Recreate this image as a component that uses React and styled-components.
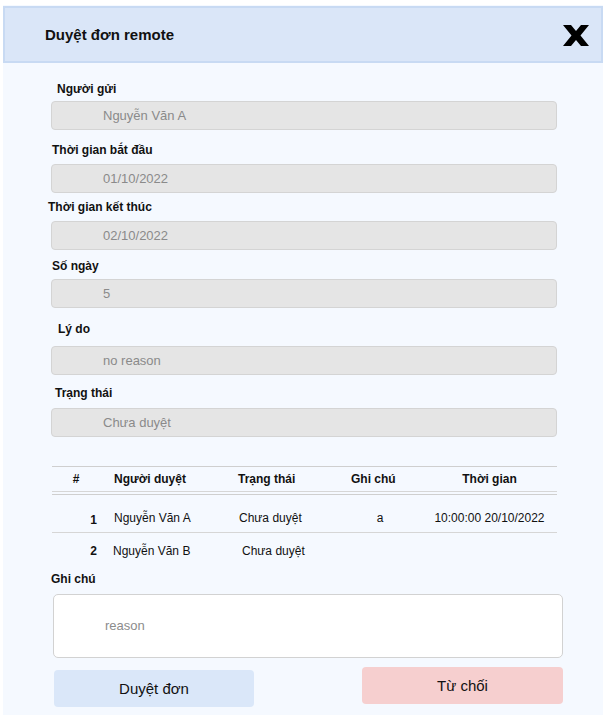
import React from 'react';
import styled, { createGlobalStyle } from 'styled-components';

const GlobalStyle = createGlobalStyle`
    body{
        margin: 0;
        background: #ffffff;
        font-family: "Liberation Sans", Arial, sans-serif;
        color: #111;
    }
    *{
        box-sizing: border-box;
    }
`

const Panel = styled.div`
    margin: 5px 0 0 3px;
    width: 600px;
    height: 710px;
    background: #f5f9ff;
    display: flex;
    flex-direction: column;
`

const Header = styled.div`
    margin-top: 1px;
    height: 57px;
    background: #dae6f8;
    border: 2px solid #c8daf3;
    display: flex;
    align-items: center;
    justify-content: space-between;
    padding: 0 12px 0 40px;

    h1{
        margin: 0;
        font-size: 15px;
        font-weight: bold;
    }
`

const CloseButton = styled.button`
    border: none;
    background: none;
    padding: 0;
    margin-top: 1px;
    width: 26px;
    height: 21px;
    cursor: pointer;
    display: flex;
`

const Body = styled.div`
    padding: 0 0 0 48px;
    display: flex;
    flex-direction: column;
`

const Field = styled.div`
    display: flex;
    flex-direction: column;
    margin-top: ${p => p.$top}px;
    gap: ${p => p.$gap}px;
`

const Label = styled.label`
    display: block;
    font-size: 12px;
    font-weight: bold;
    line-height: 16px;
    margin-left: ${p => p.$indent || 0}px;
`

const ReadInput = styled.div`
    width: 506px;
    height: 29px;
    background: #e5e5e5;
    border: 1px solid #d4d4d4;
    border-radius: 4px;
    padding-left: 51px;
    font-size: 13px;
    line-height: 27px;
    color: #8a8a8a;
`

const Table = styled.div`
    margin: 29px 0 0 1px;
    width: 505px;
`

const Row = styled.div`
    display: grid;
    grid-template-columns: 48px 125px 113px 84px 135px;
    height: ${p => p.$height}px;
    align-items: center;
    padding-top: ${p => p.$padTop || 0}px;
    border-top: ${p => p.$lineTop ? '1px solid #cfcfcf' : 'none'};
    border-bottom: ${p => p.$lineBottom ? '1px solid #d6d6d6' : 'none'};
    margin-top: ${p => p.$mt || 0}px;
`

const Cell = styled.div`
    font-size: 12px;
    font-weight: ${p => p.$bold ? 'bold' : 'normal'};
    text-align: ${p => p.$align || 'left'};
    padding-left: ${p => p.$pl || 0}px;
    padding-right: ${p => p.$pr || 0}px;
    padding-top: ${p => p.$nudge || 0}px;
    white-space: nowrap;
`

const NoteLabel = styled(Label)`
    margin-top: 2px;
`

const NoteArea = styled.textarea`
    margin: 7px 0 0 2px;
    width: 510px;
    height: 64px;
    resize: none;
    background: #ffffff;
    border: 1px solid #d2d2d2;
    border-radius: 5px;
    padding: 23px 51px;
    font-family: "Liberation Sans", Arial, sans-serif;
    font-size: 13px;
    line-height: 16px;
    outline: none;
    &::placeholder{
        color: #8c8c8c;
    }
`

const Actions = styled.div`
    display: flex;
    justify-content: space-between;
    align-items: flex-start;
    width: 509px;
    margin-left: 3px;
`

const ActionButton = styled.button`
    width: ${p => p.$width}px;
    height: 37px;
    margin-top: ${p => p.$top}px;
    border: none;
    border-radius: 4px;
    background: ${p => p.$danger ? '#f6cfcf' : '#dae7f9'};
    font-family: "Liberation Sans", Arial, sans-serif;
    font-size: 15px;
    color: #111;
    cursor: pointer;
`

const fields = [
    { label: 'Người gửi', value: 'Nguyễn Văn A', indent: 6, top: 18, gap: 4 },
    { label: 'Thời gian bắt đầu', value: '01/10/2022', indent: 1, top: 12, gap: 6 },
    { label: 'Thời gian kết thúc', value: '02/10/2022', indent: -3, top: 6, gap: 6 },
    { label: 'Số ngày', value: '5', indent: 1, top: 8, gap: 5 },
    { label: 'Lý do', value: 'no reason', indent: 7, top: 13, gap: 9 },
    { label: 'Trạng thái', value: 'Chưa duyệt', indent: 4, top: 10, gap: 7 },
]

const approvals = [
    { no: 1, name: 'Nguyễn Văn A', status: 'Chưa duyệt', note: 'a', time: '10:00:00 20/10/2022' },
    { no: 2, name: 'Nguyễn Văn B', status: 'Chưa duyệt', note: '', time: '' },
]

function CloseIcon() {
    return (
        <svg width="26" height="21" viewBox="0 0 26 21">
            <polygon fill="#000" points="0,0 8,0 13,6 18,0 26,0 17.5,10.5 26,21 18,21 13,15 8,21 0,21 8.5,10.5" />
        </svg>
    )
}

function App() {
    return (
        <>
            <GlobalStyle />
            <Panel>
                <Header>
                    <h1>Duyệt đơn remote</h1>
                    <CloseButton aria-label="close"><CloseIcon /></CloseButton>
                </Header>
                <Body>
                    {fields.map(f => (
                        <Field key={f.label} $top={f.top} $gap={f.gap}>
                            <Label $indent={f.indent}>{f.label}</Label>
                            <ReadInput>{f.value}</ReadInput>
                        </Field>
                    ))}

                    <Table>
                        <Row $height={26} $lineTop $lineBottom>
                            <Cell $bold $align="center">#</Cell>
                            <Cell $bold $pl={14}>Người duyệt</Cell>
                            <Cell $bold $pl={13}>Trạng thái</Cell>
                            <Cell $bold $pl={13}>Ghi chú</Cell>
                            <Cell $bold $align="center">Thời gian</Cell>
                        </Row>
                        {approvals.map((a, i) => (
                            <Row key={a.no} $height={i === 0 ? 39 : 36} $mt={i === 0 ? 2 : 0} $padTop={i === 0 ? 8 : 0} $lineTop={i === 0} $lineBottom={i === 0}>
                                <Cell $bold $align="right" $pr={3} $nudge={i === 0 ? 5 : 0}>{a.no}</Cell>
                                <Cell $pl={i === 0 ? 14 : 13}>{a.name}</Cell>
                                <Cell $pl={i === 0 ? 14 : 17}>{a.status}</Cell>
                                <Cell $align="center">{a.note}</Cell>
                                <Cell $align="center">{a.time}</Cell>
                            </Row>
                        ))}
                    </Table>

                    <NoteLabel>Ghi chú</NoteLabel>
                    <NoteArea placeholder="reason" />

                    <Actions>
                        <ActionButton $width={200} $top={12}>Duyệt đơn</ActionButton>
                        <ActionButton $width={201} $top={9} $danger>Từ chối</ActionButton>
                    </Actions>
                </Body>
            </Panel>
        </>
    )
}

export default App
